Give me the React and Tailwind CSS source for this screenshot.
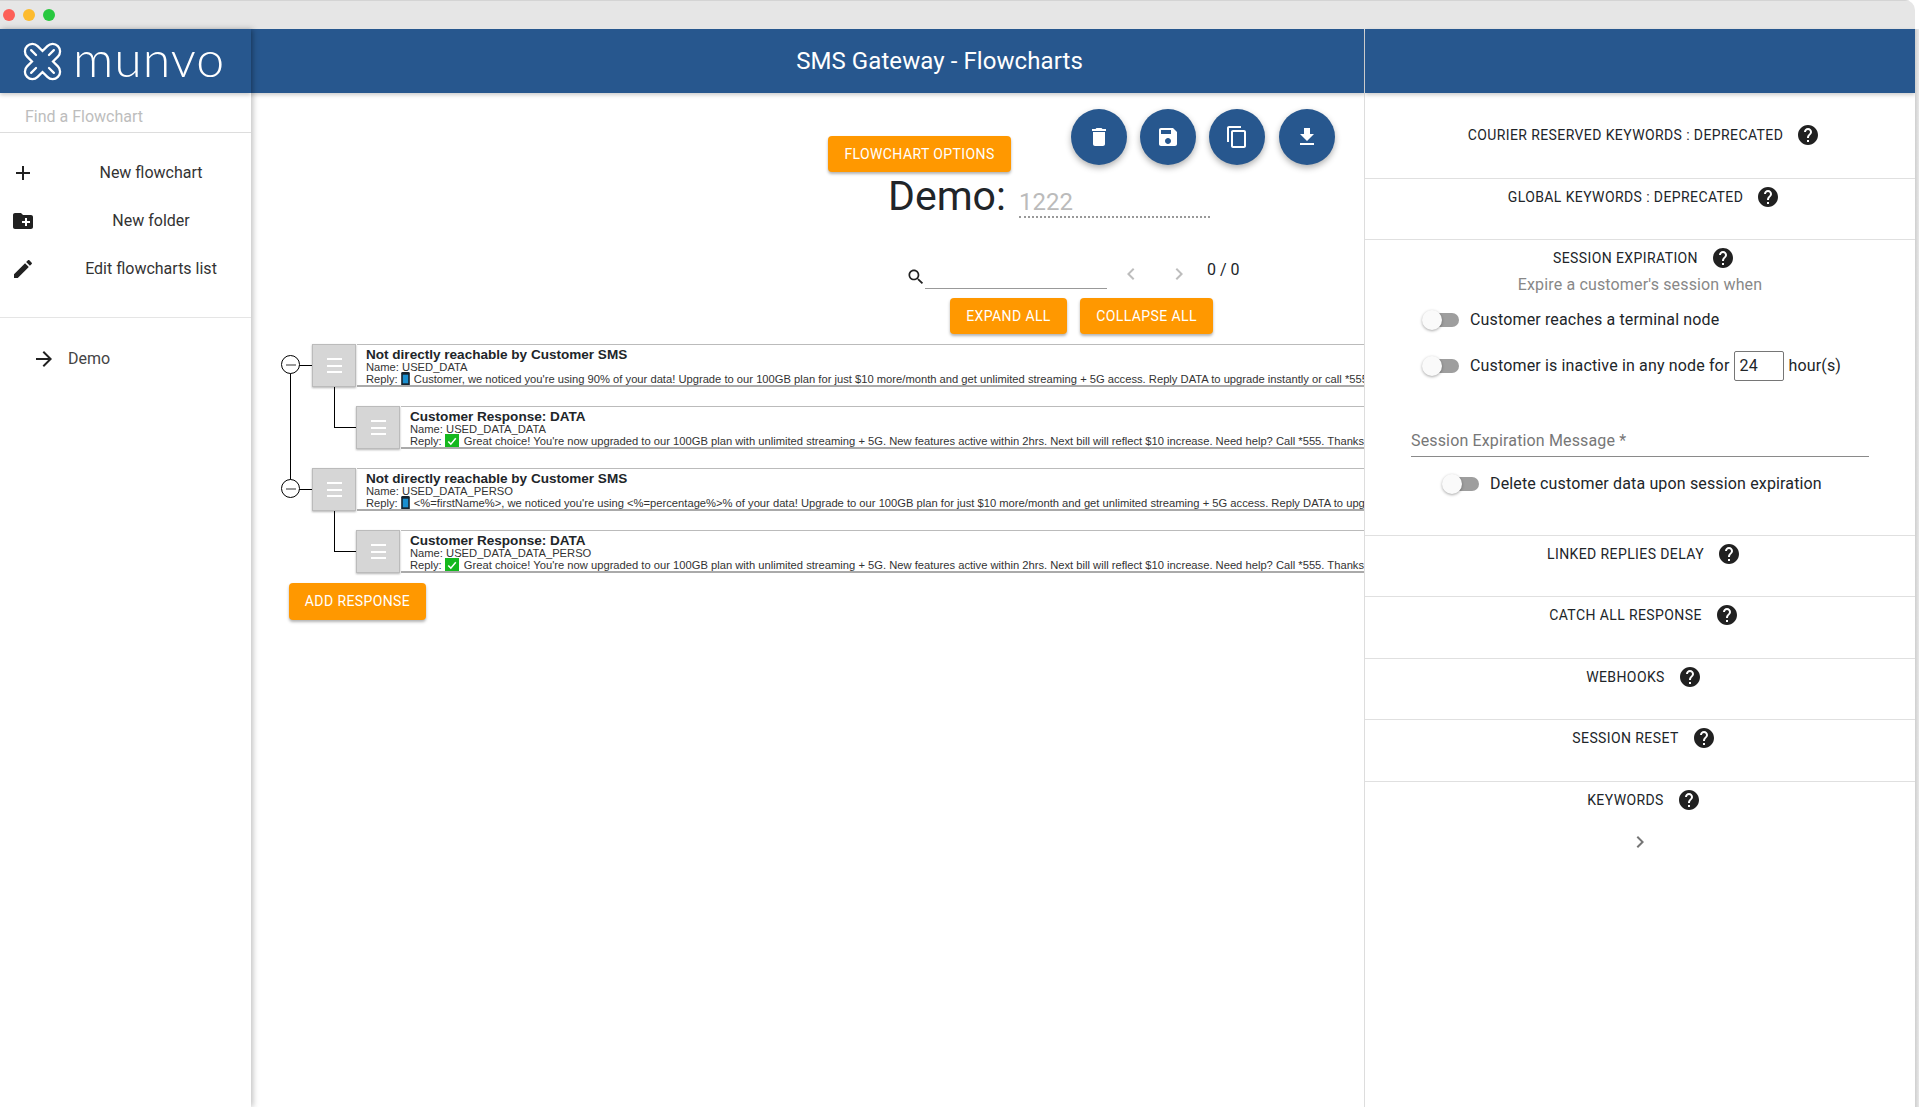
const ROBOTO = "[font-family:Roboto,sans-serif]";

const Icon = ({ d, className }) => (
  <svg viewBox="0 0 24 24" className={className} fill="currentColor">
    <path d={d} />
  </svg>
);

const icons = {
  add: "M19 13h-6v6h-2v-6H5v-2h6V5h2v6h6v2z",
  folder: "M20 6h-8l-2-2H4c-1.11 0-1.99.89-1.99 2L2 18c0 1.11.89 2 2 2h16c1.11 0 2-.89 2-2V8c0-1.11-.89-2-2-2zm-1 8h-3v3h-2v-3h-3v-2h3V9h2v3h3v2z",
  edit: "M3 17.25V21h3.75L17.81 9.94l-3.75-3.75L3 17.25zM20.71 7.04c.39-.39.39-1.02 0-1.41l-2.34-2.34c-.39-.39-1.02-.39-1.41 0l-1.83 1.83 3.75 3.75 1.83-1.83z",
  arrow: "M12 4l-1.41 1.41L16.17 11H4v2h12.17l-5.58 5.59L12 20l8-8z",
  trash: "M6 19c0 1.1.9 2 2 2h8c1.1 0 2-.9 2-2V7H6v12zM19 4h-3.5l-1-1h-5l-1 1H5v2h14V4z",
  save: "M17 3H5c-1.11 0-2 .9-2 2v14c0 1.1.89 2 2 2h14c1.1 0 2-.9 2-2V7l-4-4zm-5 16c-1.66 0-3-1.34-3-3s1.34-3 3-3 3 1.34 3 3-1.34 3-3 3zm3-10H5V5h10v4z",
  copy: "M16 1H4c-1.1 0-2 .9-2 2v14h2V3h12V1zm3 4H8c-1.1 0-2 .9-2 2v14c0 1.1.9 2 2 2h11c1.1 0 2-.9 2-2V7c0-1.1-.9-2-2-2zm0 16H8V7h11v14z",
  download: "M19 9h-4V3H9v6H5l7 7 7-7zM5 18v2h14v-2H5z",
  search: "M15.5 14h-.79l-.28-.27C15.41 12.59 16 11.11 16 9.5 16 5.91 13.09 3 9.5 3S3 5.91 3 9.5 5.91 16 9.5 16c1.61 0 3.09-.59 4.23-1.57l.27.28v.79l5 4.99L20.49 19l-4.99-5zm-6 0C7.01 14 5 11.99 5 9.5S7.01 5 9.5 5 14 7.01 14 9.5 11.99 14 9.5 14z",
  help: "M12 2C6.48 2 2 6.48 2 12s4.48 10 10 10 10-4.48 10-10S17.52 2 12 2zm1 17h-2v-2h2v2zm2.07-7.75l-.9.92C13.45 12.9 13 13.5 13 15h-2v-.5c0-1.1.45-2.1 1.17-2.83l1.24-1.26c.37-.36.59-.86.59-1.41 0-1.1-.9-2-2-2s-2 .9-2 2H8c0-2.21 1.79-4 4-4s4 1.79 4 4c0 .88-.36 1.68-.93 2.25z",
  left: "M15.41 7.41L14 6l-6 6 6 6 1.41-1.41L10.83 12z",
  right: "M10 6L8.59 7.41 13.17 12l-4.58 4.59L10 18l6-6z",
};

const Logo = () => (
  <div className="flex items-center pl-[23px] text-white">
    <svg viewBox="3 3 34 34" className="h-[39px] w-[39px]" fill="none" stroke="currentColor" strokeWidth="2" strokeLinecap="round">
      <g transform="rotate(45 20 20)">
        <path d="M13.5 7.5a6.5 6.5 0 0 1 13 0v6h6a6.5 6.5 0 0 1 0 13h-6v6a6.5 6.5 0 0 1-13 0v-6h-6a6.5 6.5 0 0 1 0-13h6z" />
        <path d="M20 6v6M20 28v6M6 20h6M28 20h6" />
      </g>
    </svg>
    <span className="ml-[11px] -mt-[6px] [font-family:Lato,sans-serif] text-[50px] leading-none font-light tracking-[1px]">munvo</span>
  </div>
);

const MenuItem = ({ icon, label }) => (
  <div className="flex h-[48px] items-center">
    <div className="flex w-[46px] justify-center text-[#212121]">
      <Icon d={icon} className="h-[24px] w-[24px]" />
    </div>
    <span className="flex-1 pl-[5px] text-center text-[16px] text-[#333]">{label}</span>
  </div>
);

const Sidebar = () => (
  <aside className="relative z-20 flex w-[251px] shrink-0 flex-col bg-white shadow-[2px_0_6px_rgba(0,0,0,0.25)]">
    <div className="flex h-[64px] items-center bg-[#27578e] shadow-[0_2px_4px_rgba(0,0,0,0.2)]">
      <Logo />
    </div>
    <div className="flex h-[40px] items-end border-b border-[#ddd] pb-[3px] pl-[25px] text-[16px] text-[#bdbdbd]">Find a Flowchart</div>
    <div className="mt-[16px]">
      <MenuItem icon={icons.add} label="New flowchart" />
      <MenuItem icon={icons.folder} label="New folder" />
      <MenuItem icon={icons.edit} label="Edit flowcharts list" />
    </div>
    <div className="mt-[24px] border-b border-[#e5e5e5]" />
    <div className="mt-[17px] flex h-[48px] items-center gap-[12px] pl-[32px] text-[16px] text-[#444]">
      <Icon d={icons.arrow} className="h-[24px] w-[24px] text-[#212121]" />
      Demo
    </div>
  </aside>
);

const OrangeButton = ({ className, children }) => (
  <button className={`flex h-[36px] items-center justify-center rounded-[4px] bg-[#ff9800] text-[14px] font-normal tracking-[0.4px] text-white shadow-[0_2px_3px_rgba(0,0,0,0.3)] ${className}`}>
    {children}
  </button>
);

const Fab = ({ icon }) => (
  <button className="flex h-[56px] w-[56px] items-center justify-center rounded-full bg-[#27578e] text-white shadow-[0_3px_6px_rgba(0,0,0,0.3)]">
    <Icon d={icon} className="h-[24px] w-[24px]" />
  </button>
);

const Phone = () => (
  <svg viewBox="0 0 8 13" className="-my-[3px] mr-[4px] inline-block h-[14px] w-[9px] align-baseline">
    <rect width="8" height="13" rx="1.2" fill="#16242e" />
    <rect x="1.5" y="2.5" width="5" height="8" fill="#1a8fcf" />
  </svg>
);

const Check = () => (
  <svg viewBox="0 0 13 13" className="-my-[3px] mr-[5px] inline-block h-[14px] w-[14px] align-baseline">
    <rect width="13" height="13" fill="#14b81e" />
    <path d="M3 7l2.4 2.4L10 4" fill="none" stroke="#fff" strokeWidth="1.4" />
  </svg>
);

const FlowNode = ({ title, name, reply, emoji, child, hasCircle, lineDown }) => (
  <div className={`relative flex h-[43px] ${child ? "ml-[44px]" : ""}`}>
    {hasCircle && (
      <>
        <div className="absolute top-[21px] left-[-13px] h-[1px] w-[13px] bg-black" />
        <div className="absolute top-[11px] left-[-31px] z-10 flex h-[19px] w-[19px] items-center justify-center rounded-full border border-black bg-white">
          <div className="h-[2px] w-[10px] bg-[#999]" />
        </div>
      </>
    )}
    {lineDown && <div className="absolute top-[21px] left-[-22px] h-[124px] w-[1px] bg-black" />}
    {child && <div className="absolute top-[-19px] left-[-22px] h-[41px] w-[22px] border-b border-l border-black" />}
    <div className="flex h-[43px] w-[44px] shrink-0 flex-col items-center justify-center gap-[4.5px] border border-[#bbb] bg-[#d6d6d6] shadow-[0_1px_2px_rgba(0,0,0,0.3)]">
      <div className="h-[2px] w-[15px] bg-white" />
      <div className="h-[2px] w-[15px] bg-white" />
      <div className="h-[2px] w-[15px] bg-white" />
    </div>
    <div className="ml-[1px] min-w-0 flex-1 overflow-hidden border-t border-b-2 border-t-[#bbb] border-b-[#aaa] pt-[1px] pl-[9px] [font-family:'Liberation_Sans',Arial,sans-serif] whitespace-nowrap">
      <div className="text-[13.55px] leading-[17px] font-bold text-[#212529]">{title}</div>
      <div className="-mt-[1px] text-[11.2px] leading-[11.5px] text-[#333]">Name: {name}</div>
      <div className="text-[11.2px] leading-[11.5px] text-[#333]">
        Reply: {emoji === "phone" ? <Phone /> : <Check />}
        {reply}
      </div>
    </div>
  </div>
);

const upsell = "we noticed you're using";
const upgrade = "of your data! Upgrade to our 100GB plan for just $10 more/month and get unlimited streaming + 5G access. Reply DATA to upgrade instantly or call *555";
const great = "Great choice! You're now upgraded to our 100GB plan with unlimited streaming + 5G. New features active within 2hrs. Next bill will reflect $10 increase. Need help? Call *555. Thanks for choosing us!";

const Main = () => (
  <main className="relative z-0 flex w-[1113px] shrink-0 flex-col overflow-hidden">
    <header className="flex h-[64px] shrink-0 items-center justify-center bg-[#27578e] pl-[264px] text-[24px] font-normal tracking-[0.08px] text-white shadow-[0_2px_4px_rgba(0,0,0,0.2)]">
      SMS Gateway - Flowcharts
    </header>

    <div className="flex h-[79px] items-start pl-[577px]">
      <OrangeButton className="mt-[43px] w-[183px]">FLOWCHART OPTIONS</OrangeButton>
      <div className="mt-[16px] ml-[60px] flex gap-[13px]">
        <Fab icon={icons.trash} />
        <Fab icon={icons.save} />
        <Fab icon={icons.copy} />
        <div className="ml-px">
          <Fab icon={icons.download} />
        </div>
      </div>
    </div>

    <div className="flex h-[46px] items-baseline pl-[637px]">
      <span className="text-[41px] leading-[48px] text-[#212529]">Demo:</span>
      <span className="ml-[13px] w-[191px] border-b-2 border-dotted border-[#999] text-[24px] leading-[28px] text-[#bbb]">1222</span>
    </div>

    <div className="mt-[46px] flex h-[25px] items-start pl-[655px]">
      <Icon d={icons.search} className="mt-[3px] h-[20px] w-[20px] text-[#212121]" />
      <div className="-ml-[1px] h-[25px] w-[182px] border-b border-[#999]" />
      <Icon d={icons.left} className="-mt-[2px] ml-[12px] h-[24px] w-[24px] text-[#bdbdbd]" />
      <Icon d={icons.right} className="-mt-[2px] ml-[24px] h-[24px] w-[24px] text-[#bdbdbd]" />
      <span className="-mt-[6px] ml-[16px] text-[16px] leading-[24px] text-[#212529]">0 / 0</span>
    </div>

    <div className="mt-[9px] flex gap-[13px] pl-[699px]">
      <OrangeButton className="w-[117px]">EXPAND ALL</OrangeButton>
      <OrangeButton className="w-[133px]">COLLAPSE ALL</OrangeButton>
    </div>

    <div className="mt-[10px] flex flex-col gap-[19px] pl-[61px]">
      <FlowNode hasCircle lineDown title="Not directly reachable by Customer SMS" name="USED_DATA" emoji="phone" reply={`Customer, ${upsell} 90% ${upgrade}`} />
      <FlowNode child title="Customer Response: DATA" name="USED_DATA_DATA" emoji="check" reply={great} />
      <FlowNode hasCircle title="Not directly reachable by Customer SMS" name="USED_DATA_PERSO" emoji="phone" reply={`<%=firstName%>, ${upsell} <%=percentage%>% ${upgrade}`} />
      <FlowNode child title="Customer Response: DATA" name="USED_DATA_DATA_PERSO" emoji="check" reply={great} />
    </div>

    <div className="mt-[10px] pl-[38px]">
      <OrangeButton className="h-[37px] w-[137px]">ADD RESPONSE</OrangeButton>
    </div>
  </main>
);

const Toggle = () => (
  <div className="relative h-[20px] w-[37px] shrink-0">
    <div className="absolute top-[3px] right-0 h-[14px] w-[30px] rounded-full bg-[#9e9e9e]" />
    <div className="absolute top-0 left-0 h-[20px] w-[20px] rounded-full bg-[#fafafa] shadow-[0_1px_3px_rgba(0,0,0,0.35)]" />
  </div>
);

const SectionTitle = ({ children }) => (
  <div className="flex h-[24px] items-center justify-center pl-[8px]">
    <span className="text-[14px] tracking-[0.4px] text-[#212529]">{children}</span>
    <Icon d={icons.help} className="ml-[13px] h-[24px] w-[24px] text-[#212121]" />
  </div>
);

const RightPanel = () => (
  <section className="flex min-w-0 flex-1 flex-col border-l border-[#ddd]">
    <div className="h-[64px] shrink-0 bg-[#27578e] shadow-[0_2px_4px_rgba(0,0,0,0.2)]" />
    <div className="h-[85px] pt-[30px]">
      <SectionTitle>COURIER RESERVED KEYWORDS : DEPRECATED</SectionTitle>
    </div>
    <div className="h-[61px] border-t border-[#e0e0e0] pt-[6px]">
      <SectionTitle>GLOBAL KEYWORDS : DEPRECATED</SectionTitle>
    </div>
    <div className="h-[296px] border-t border-[#e0e0e0] pt-[6px]">
      <SectionTitle>SESSION EXPIRATION</SectionTitle>
      <div className="mt-[3px] text-center text-[16px] leading-[24px] tracking-[0.15px] text-[#888]">Expire a customer's session when</div>
      <div className="mt-[11px] flex h-[24px] items-center gap-[11px] pl-[57px] text-[16px] tracking-[0.15px] text-[#212529]">
        <Toggle />
        Customer reaches a terminal node
      </div>
      <div className="mt-[19px] flex h-[30px] items-center pl-[57px] text-[16px] tracking-[0.15px] text-[#212529]">
        <Toggle />
        <span className="ml-[11px]">Customer is inactive in any node for</span>
        <div className="ml-[5px] flex h-[30px] w-[50px] items-center rounded-[2px] border border-[#767676] pl-[4px]">24</div>
        <span className="ml-[4px]">hour(s)</span>
      </div>
      <div className="mt-[45px] mr-[46px] ml-[46px] flex h-[31px] items-center border-b border-[#8a8a8a] text-[16px] tracking-[0.15px] text-[#777]">Session Expiration Message *</div>
      <div className="mt-[15px] flex h-[24px] items-center gap-[11px] pl-[77px] text-[16px] tracking-[0.15px] text-[#212529]">
        <Toggle />
        Delete customer data upon session expiration
      </div>
    </div>
    <div className="h-[61px] border-t border-[#e0e0e0] pt-[6px]">
      <SectionTitle>LINKED REPLIES DELAY</SectionTitle>
    </div>
    <div className="h-[62px] border-t border-[#e0e0e0] pt-[6px]">
      <SectionTitle>CATCH ALL RESPONSE</SectionTitle>
    </div>
    <div className="h-[61px] border-t border-[#e0e0e0] pt-[6px]">
      <SectionTitle>WEBHOOKS</SectionTitle>
    </div>
    <div className="h-[62px] border-t border-[#e0e0e0] pt-[6px]">
      <SectionTitle>SESSION RESET</SectionTitle>
    </div>
    <div className="border-t border-[#e0e0e0] pt-[6px]">
      <SectionTitle>KEYWORDS</SectionTitle>
      <div className="mt-[18px] flex justify-center">
        <Icon d={icons.right} className="h-[24px] w-[24px] text-[#757575]" />
      </div>
    </div>
  </section>
);

export default function App() {
  return (
    <div className={`flex h-[1107px] w-[1919px] overflow-hidden bg-white ${ROBOTO}`}>
      <div className="flex w-[1915px] shrink-0 flex-col overflow-hidden rounded-tr-[10px]">
        <div className="flex h-[29px] shrink-0 items-center gap-[8px] border-t border-[#d4d4d4] bg-[#e6e6e6] pl-[3px]">
          <div className="h-[12px] w-[12px] rounded-full bg-[#fd5f57]" />
          <div className="h-[12px] w-[12px] rounded-full bg-[#fdbb2e]" />
          <div className="h-[12px] w-[12px] rounded-full bg-[#28c83f]" />
        </div>
        <div className="flex min-h-0 flex-1">
          <Sidebar />
          <Main />
          <RightPanel />
        </div>
      </div>
      <div className="mt-[29px] w-[4px] bg-gradient-to-r from-[#cfcfcf] to-[#e8e8e8]" />
    </div>
  );
}
